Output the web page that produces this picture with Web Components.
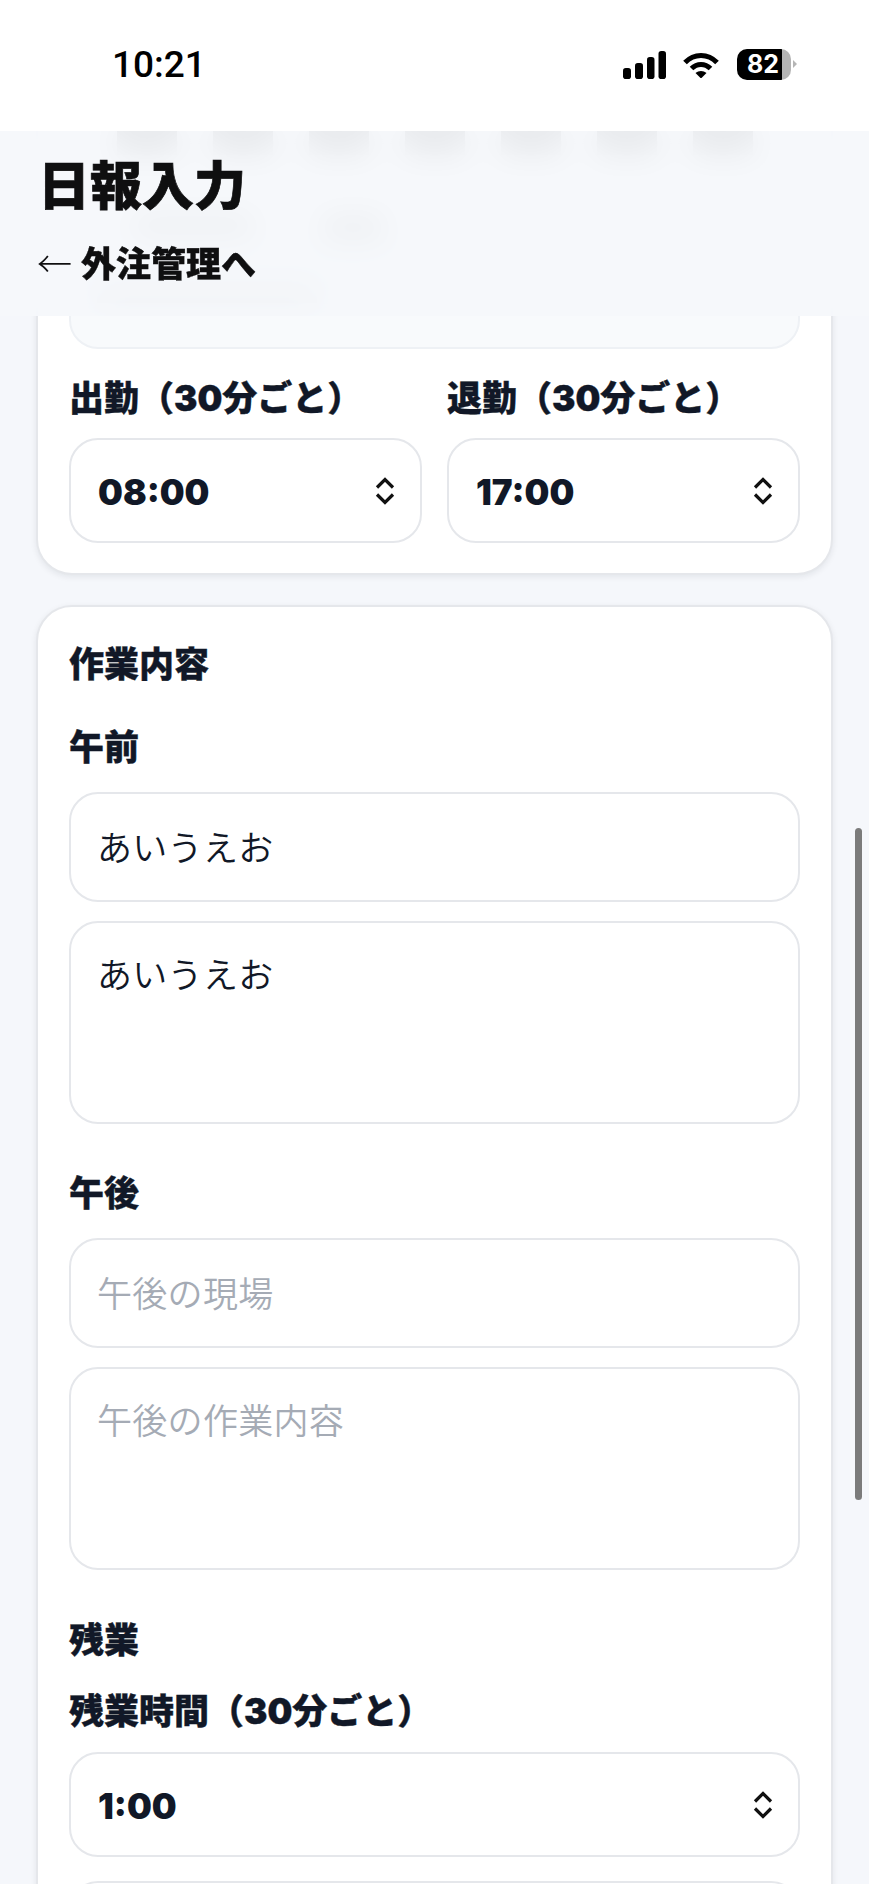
<!DOCTYPE html>
<html lang="ja">
<head>
<meta charset="utf-8">
<title>日報入力</title>
<style>
  html, body { margin: 0; height: 100%; }
  body { background: #f5f7fb; overflow: hidden; font-family: "Noto Sans CJK JP", sans-serif; }
</style>
</head>
<body>
<report-page>
  <status-bar slot="status"></status-bar>
  <page-header slot="header" title="日報入力" back="外注管理へ"></page-header>

  <form-card class="first">
    <blurred-rows></blurred-rows>
    <div class="cols">
      <div>
        <field-label class="above">出勤（30分ごと）</field-label>
        <select-box value="08:00"></select-box>
      </div>
      <div>
        <field-label class="above">退勤（30分ごと）</field-label>
        <select-box value="17:00"></select-box>
      </div>
    </div>
  </form-card>

  <form-card class="second">
    <field-label class="heading">作業内容</field-label>

    <field-label class="period">午前</field-label>
    <text-box value="あいうえお"></text-box>
    <text-box class="area" multiline value="あいうえお"></text-box>

    <field-label class="period next">午後</field-label>
    <text-box placeholder="午後の現場"></text-box>
    <text-box class="area" multiline placeholder="午後の作業内容"></text-box>

    <field-label class="overtime">残業</field-label>
    <field-label class="overtime-time">残業時間（30分ごと）</field-label>
    <select-box value="1:00"></select-box>
    <text-box class="area" multiline></text-box>
  </form-card>
</report-page>

<script>
  class ReportPage extends HTMLElement {
    constructor() {
      super();
      this.attachShadow({ mode: "open" });
      this.shadowRoot.innerHTML = `
        <style>
          :host { display: block; position: relative; height: 1884px; overflow: hidden; }
          .status { position: relative; z-index: 3; }
          .header { position: absolute; z-index: 2; left: 0; right: 0; top: 131px; }
          main { display: flex; flex-direction: column; gap: 30px; padding: 0 36px; }
          .thumb {
            position: absolute; z-index: 4; left: 855px; top: 828px;
            width: 7px; height: 672px; border-radius: 4px; background: #7b7b7b;
          }
        </style>
        <div class="status"><slot name="status"></slot></div>
        <div class="header"><slot name="header"></slot></div>
        <main><slot></slot></main>
        <div class="thumb"></div>
      `;
    }
  }

  class StatusBar extends HTMLElement {
    constructor() {
      super();
      this.attachShadow({ mode: "open" });
      this.shadowRoot.innerHTML = `
        <style>
          :host { display: block; background: #fff; height: 131px; }
          .bar { height: 100%; display: flex; box-sizing: border-box; padding: 49px 72px 0 112px; align-items: flex-start; justify-content: space-between; }
          .time { font: 500 37px/32px Roboto, sans-serif; color: #000; }
          .icons { display: flex; align-items: flex-start; }
          svg { display: block; }
          .wifi { margin: 3px 0 0 17px; }
          .signal { margin-top: 2px; }
          .battery {
            margin-left: 18px; width: 54px; height: 31px; border-radius: 10px;
            background: linear-gradient(90deg, #000 83%, #b5b5b5 83%);
            color: #fff; font: 700 25px/31px Inter, sans-serif;
            box-sizing: border-box; padding-left: 10px; letter-spacing: 0;
          }
          .cap { margin: 11px 0 0 2px; width: 0; height: 0; border-left: 4px solid #b5b5b5; border-top: 4px solid transparent; border-bottom: 4px solid transparent; }
        </style>
        <div class="bar">
          <div class="time">10:21</div>
          <div class="icons">
            <svg class="signal" width="43" height="28" viewBox="0 0 43 28" fill="#000">
              <rect x="0" y="17" width="8" height="11" rx="2.8"/>
              <rect x="12" y="12" width="8" height="16" rx="2.8"/>
              <rect x="24" y="6" width="7.5" height="22" rx="2.8"/>
              <rect x="35.5" y="0" width="7.5" height="28" rx="2.8"/>
            </svg>
            <svg class="wifi" width="36" height="26" viewBox="0 0 36 26">
              <path d="M2 10.5C11 1 25 1 34 10.5" fill="none" stroke="#000" stroke-width="5" stroke-linecap="butt"/>
              <path d="M8.5 16.5C14 11 22 11 27.5 16.5" fill="none" stroke="#000" stroke-width="5"/>
              <path d="M12.5 21C15.5 18.2 20.5 18.2 23.5 21L18 26.5Z" fill="#000"/>
            </svg>
            <div class="battery">82</div>
            <div class="cap"></div>
          </div>
        </div>
      `;
    }
  }

  class PageHeader extends HTMLElement {
    constructor() {
      super();
      this.attachShadow({ mode: "open" });
    }

    connectedCallback() {
      this.shadowRoot.innerHTML = `
        <style>
          :host { display: block; }
          .wrap {
            height: 185px; box-sizing: border-box; padding: 22px 0 0 38px;
            background: rgba(245, 247, 251, 0.93);
            -webkit-backdrop-filter: blur(15px);
            backdrop-filter: blur(15px);
          }
          h1 { margin: 0; font: 900 52px/60px "Noto Sans CJK JP", sans-serif; color: #0f0f10; -webkit-text-stroke: 0.7px #0f0f10; }
          a { display: block; margin: 29px 0 0 -1px; font: 900 35px/40px "Noto Sans CJK JP", sans-serif; color: #0f0f10; text-decoration: none; -webkit-text-stroke: 0.4px #0f0f10; }
          .arrow { font: 300 35px/40px "Noto Sans CJK JP", sans-serif; margin-right: 9px; -webkit-text-stroke: 0; }
        </style>
        <div class="wrap">
          <h1>${this.getAttribute("title")}</h1>
          <a href="#"><span class="arrow">←</span>${this.getAttribute("back")}</a>
        </div>
      `;
    }
  }

  class FormCard extends HTMLElement {
    constructor() {
      super();
      this.attachShadow({ mode: "open" });
      this.shadowRoot.innerHTML = `
        <style>
          :host {
            display: block; box-sizing: border-box; background: #fff;
            border: 2px solid #e5e7eb; border-radius: 36px;
            box-shadow: 0 2px 6px rgba(17, 24, 39, 0.08);
            padding: 37px 31px 30px;
          }
          :host(.first) { margin-top: -40px; padding-top: 38px; }
          :host(.second) { padding-bottom: 60px; }
          ::slotted(.cols) { display: grid; grid-template-columns: 353px 353px; gap: 25px; margin-top: 29px; }
          ::slotted(.period) { margin: 43px 0 25px; }
          ::slotted(.period.next) { margin-top: 49px; }
          ::slotted(.overtime) { margin: 50px 0 31px; }
          ::slotted(.overtime-time) { margin-bottom: 21px; }
          ::slotted(.area) { margin-top: 19px; }
          ::slotted(select-box) { margin-bottom: 24px; }
        </style>
        <slot></slot>
      `;
    }
  }

  class FieldLabel extends HTMLElement {
    constructor() {
      super();
      this.attachShadow({ mode: "open" });
      this.shadowRoot.innerHTML = `
        <style>
          :host {
            display: block; padding: 2px 0;
            font: 900 35px/36px Inter, "Noto Sans CJK JP", sans-serif;
            color: #111827; white-space: nowrap; -webkit-text-stroke: 0.4px #111827;
          }
          :host(.above) { margin-bottom: 20px; }
        </style>
        <slot></slot>
      `;
    }
  }

  class SelectBox extends HTMLElement {
    constructor() {
      super();
      this.attachShadow({ mode: "open" });
    }

    connectedCallback() {
      this.shadowRoot.innerHTML = `
        <style>
          :host { display: block; }
          .box {
            height: 105px; box-sizing: border-box; display: flex; align-items: center;
            justify-content: space-between; padding: 0 25px 0 27px;
            border: 2px solid #e5e7eb; border-radius: 29px; background: #fff;
            font: 900 35px/1 Inter, sans-serif; color: #111827;
          }
          span { display: block; padding-top: 4px; }
          svg { display: block; }
        </style>
        <div class="box">
          <span>${this.getAttribute("value")}</span>
          <svg width="20" height="28" viewBox="0 0 20 28" fill="none" stroke="#111" stroke-width="3.2">
            <polyline points="2,10.5 10,2.5 18,10.5"/>
            <polyline points="2,17.5 10,25.5 18,17.5"/>
          </svg>
        </div>
      `;
    }
  }

  class TextBox extends HTMLElement {
    constructor() {
      super();
      this.attachShadow({ mode: "open" });
    }

    connectedCallback() {
      const value = this.getAttribute("value");
      const placeholder = this.getAttribute("placeholder") || "";
      const multiline = this.hasAttribute("multiline");
      this.shadowRoot.innerHTML = `
        <style>
          :host { display: block; }
          .box {
            box-sizing: border-box; padding: 0 26px 2px; background: #fff;
            border: 2px solid #e5e7eb; border-radius: 29px;
            font: 350 35px/40px "Noto Sans CJK JP", sans-serif; color: #111827;
            letter-spacing: 0.3px;
            height: 110px; display: flex; align-items: center;
          }
          .box.multi { height: 203px; align-items: flex-start; padding-top: 30px; }
          .hint { color: #a5abb5; }
        </style>
        <div class="box ${multiline ? "multi" : ""}">
          <span class="${value ? "" : "hint"}">${value || placeholder}</span>
        </div>
      `;
    }
  }

  // What scrolled under the header: no readable text, only dark bars that the
  // header's backdrop blur turns into smudges.
  class BlurredRows extends HTMLElement {
    constructor() {
      super();
      this.attachShadow({ mode: "open" });
      this.shadowRoot.innerHTML = `
        <style>
          :host { display: block; }
          .row { display: grid; grid-template-columns: repeat(7, 96px); padding-left: 30px; }
          .row i { display: block; width: 60px; height: 24px; margin-left: 18px; background: #444; }
          .row.two { margin-top: 60px; height: 24px; grid-template-columns: 190px 96px; padding-left: 64px; }
          .row.two i { width: 120px; height: 20px; margin-left: 0; background: #888; }
          .row.two i + i { width: 60px; height: 24px; }
          .field {
            height: 110px; box-sizing: border-box;
            background: #f8fafc; border: 2px solid #eef1f5; border-radius: 29px;
            display: flex; align-items: center; padding-left: 26px;
          }
          .field i { display: block; width: 220px; height: 18px; background: #bbb; }
        </style>
        <div class="row"><i></i><i></i><i></i><i></i><i></i><i></i><i></i></div>
        <div class="row two"><i></i><i></i></div>
        <div class="field"><i></i></div>
      `;
    }
  }

  customElements.define("report-page", ReportPage);
  customElements.define("status-bar", StatusBar);
  customElements.define("page-header", PageHeader);
  customElements.define("form-card", FormCard);
  customElements.define("field-label", FieldLabel);
  customElements.define("select-box", SelectBox);
  customElements.define("text-box", TextBox);
  customElements.define("blurred-rows", BlurredRows);
</script>
</body>
</html>
